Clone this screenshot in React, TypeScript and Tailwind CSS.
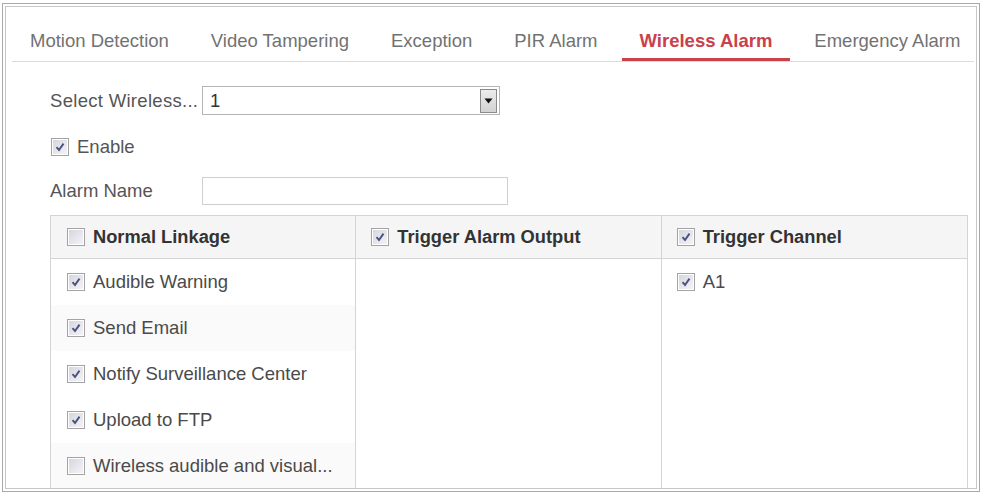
import React from 'react';

const tabs = ['Motion Detection', 'Video Tampering', 'Exception', 'PIR Alarm', 'Wireless Alarm', 'Emergency Alarm'];

const linkage = [
  { label: 'Audible Warning', checked: true },
  { label: 'Send Email', checked: true },
  { label: 'Notify Surveillance Center', checked: true },
  { label: 'Upload to FTP', checked: true },
  { label: 'Wireless audible and visual...', checked: false },
];

function Check({ checked }: { checked: boolean }) {
  return (
    <span className="w-[18px] h-[18px] shrink-0 border border-[#a3a3a3] p-[1px] bg-white flex">
      <span className="flex-1 bg-gradient-to-br from-[#d6d6de] to-[#f3f3f7] flex items-center justify-center">
        {checked && (
          <svg width="12" height="12" viewBox="0 0 12 12">
            <path d="M2.5 6.2 L5 9 L9.5 2.6" fill="none" stroke="#4a5080" strokeWidth="1.9" />
          </svg>
        )}
      </span>
    </span>
  );
}

export default function App() {
  return (
    <div className="w-[984px] h-[495px] bg-white pt-[3px] pl-[2px]" style={{ fontFamily: '"Liberation Sans", Arial, sans-serif' }}>
      <div className="w-[978px] h-[489px] border border-[#a9a9a9] p-[2px]">
        <div className="h-full border border-[#c6c6c6] overflow-hidden bg-white">
          {/* tabs */}
          <div className="mt-[13px] ml-[6px] mr-[2px] flex gap-[6px] border-b border-[#dcdcdc]">
            {tabs.map((tab) => {
              const active = tab === 'Wireless Alarm';
              return (
                <div
                  key={tab}
                  className={`h-[41px] px-[18px] flex items-center whitespace-nowrap ${active ? 'text-[18.5px] text-[#c8414b] font-bold border-b-[3px] border-[#c8414b] -mb-px pt-[3px]' : 'text-[18.5px] text-[#727272]'}`}
                >
                  {tab}
                </div>
              );
            })}
          </div>

          <div className="pl-[44px]">
            <div className="mt-[24px] flex items-center h-[29px]">
              <span className="w-[152px] text-[18.5px] text-[#555] tracking-[0.3px]">Select Wireless...</span>
              <div className="w-[298px] h-[29px] border border-[#b5b5b5] flex items-center justify-between pl-[7px] pr-[2px]">
                <span className="text-[18.5px] text-[#333]">1</span>
                <span className="w-[17px] h-[24px] border border-[#8a8a8a] bg-gradient-to-b from-[#ececec] to-[#d2d2d2] flex items-center justify-center">
                  <svg width="9" height="6" viewBox="0 0 9 6">
                    <path d="M0.5 0.5 L8.5 0.5 L4.5 5.5 Z" fill="#111" />
                  </svg>
                </span>
              </div>
            </div>

            <div className="mt-[22px] h-[20px] flex items-center gap-[8px] pl-[1px]">
              <Check checked />
              <span className="text-[18.5px] text-[#555]">Enable</span>
            </div>

            <div className="mt-[20px] flex items-center h-[28px]">
              <span className="w-[152px] text-[18.5px] text-[#555]">Alarm Name</span>
              <div className="w-[306px] h-[28px] border border-[#cfcfcf]" />
            </div>

            <div className="mt-[10px] w-[918px] border border-[#d4d4d4] grid grid-cols-3">
              <div className="border-r border-[#d4d4d4]">
                <div className="h-[43px] bg-[#f5f5f5] border-b border-[#d4d4d4] flex items-center gap-[8px] pl-[16px]">
                  <Check checked={false} />
                  <span className="text-[18.3px] font-bold text-[#333]">Normal Linkage</span>
                </div>
                {linkage.map((item, i) => (
                  <div
                    key={item.label}
                    className={`h-[46px] flex items-center gap-[8px] pl-[16px] ${i === 1 || i === 4 ? 'bg-[#fafafa]' : 'bg-white'}`}
                  >
                    <Check checked={item.checked} />
                    <span className="text-[18.5px] text-[#4a4a4a]">{item.label}</span>
                  </div>
                ))}
              </div>
              <div className="border-r border-[#d4d4d4]">
                <div className="h-[43px] bg-[#f5f5f5] border-b border-[#d4d4d4] flex items-center gap-[8px] pl-[15px]">
                  <Check checked />
                  <span className="text-[18.3px] font-bold text-[#333]">Trigger Alarm Output</span>
                </div>
              </div>
              <div>
                <div className="h-[43px] bg-[#f5f5f5] border-b border-[#d4d4d4] flex items-center gap-[8px] pl-[15px]">
                  <Check checked />
                  <span className="text-[18.3px] font-bold text-[#333]">Trigger Channel</span>
                </div>
                <div className="h-[46px] flex items-center gap-[8px] pl-[15px]">
                  <Check checked />
                  <span className="text-[18.5px] text-[#4a4a4a]">A1</span>
                </div>
              </div>
            </div>
          </div>
        </div>
      </div>
    </div>
  );
}
